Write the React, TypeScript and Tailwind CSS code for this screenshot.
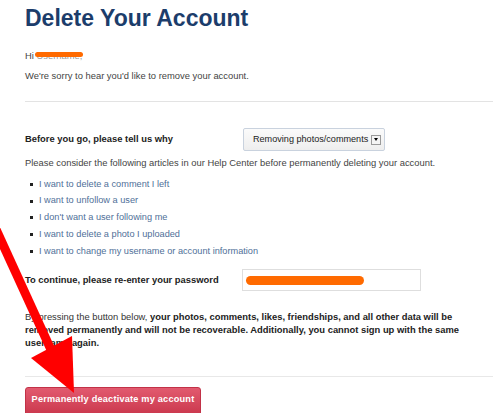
import React from "react";

const links = [
  "I want to delete a comment I left",
  "I want to unfollow a user",
  "I don't want a user following me",
  "I want to delete a photo I uploaded",
  "I want to change my username or account information",
];

export default function App() {
  return (
    <div className="relative w-[501px] h-[413px] overflow-hidden bg-white" style={{ fontFamily: '"Liberation Sans", Arial, sans-serif' }}>
      <div className="pl-[25px] pr-[8px] text-[#444] text-[9.4px]">
        <h1 className="pt-[4px] text-[23px] leading-[28px] font-bold text-[#1c3d6b]">Delete Your Account</h1>
        <div className="mt-[17px] h-[13px] leading-[13px] relative">
          <span>Hi <span className="text-[#999]">Username,</span></span>
          <span className="absolute left-[10px] top-[3px] w-[48px] h-[5px] rounded-full bg-[#ff6a00]" />
        </div>
        <p className="mt-[7px] leading-[13px]">We're sorry to hear you'd like to remove your account.</p>
        <div className="mt-[19px] h-px bg-[#e3e3e3]" />
        <div className="mt-[26px] flex items-center h-[23px]">
          <span className="w-[218px] font-bold text-[#222]">Before you go, please tell us why</span>
          <div className="w-[142px] h-[23px] border border-[#c9d2de] rounded-[2px] bg-gradient-to-b from-[#fbfbfb] to-[#eeeeee] flex items-center pl-[9px] pr-[3px] text-[#222] text-[9.1px]">
            <span className="flex-1">Removing photos/comments</span>
            <span className="w-[10px] h-[10px] border border-[#9a9a9a] bg-[#f4f4f4] flex items-center justify-center">
              <span className="w-0 h-0 border-l-[2.5px] border-r-[2.5px] border-t-[3px] border-l-transparent border-r-transparent border-t-black" />
            </span>
          </div>
        </div>
        <p className="mt-[5px] leading-[13px]">Please consider the following articles in our Help Center before permanently deleting your account.</p>
        <ul className="mt-[7px] flex flex-col text-[9.2px]">
          {links.map((l) => (
            <li key={l} className="flex items-center h-[16.8px] pl-[5px]">
              <span className="w-[3px] h-[3px] bg-[#222] mr-[6px]" />
              <span className="text-[#4f6f98]">{l}</span>
            </li>
          ))}
        </ul>
        <div className="mt-[9px] flex items-center h-[22px]">
          <span className="w-[217px] font-bold text-[#222]">To continue, please re-enter your password</span>
          <div className="relative w-[179px] h-[22px] border border-[#dedede] bg-white">
            <span className="absolute left-[3px] top-[6px] w-[118px] h-[9px] rounded-full bg-[#ff6a00]" />
          </div>
        </div>
        <p className="mt-[19px] leading-[13px] w-[450px] text-[#333]">
          By pressing the button below, <b className="text-[#222]">your photos, comments, likes, friendships, and all other data will be removed permanently and will not be recoverable. Additionally, you cannot sign up with the same username again.</b>
        </p>
        <div className="mt-[27px] h-px bg-[#e8e8e8]" />
        <div className="mt-[10px] w-[176px] h-[30px] rounded-t-[3px] bg-gradient-to-b from-[#e25a6f] to-[#c9354b] border border-[#c23247] text-white font-bold text-[9.2px] flex items-start justify-center pt-[5px] tracking-[0.2px]">
          Permanently deactivate my account
        </div>
      </div>
      <svg className="absolute left-0 top-0 pointer-events-none" width="501" height="413" viewBox="0 0 501 413">
        <line x1="-6" y1="225" x2="52" y2="352" stroke="#ff0000" strokeWidth="9" />
        <polygon points="31,358 72,336 74,393" fill="#ff0000" />
      </svg>
    </div>
  );
}
